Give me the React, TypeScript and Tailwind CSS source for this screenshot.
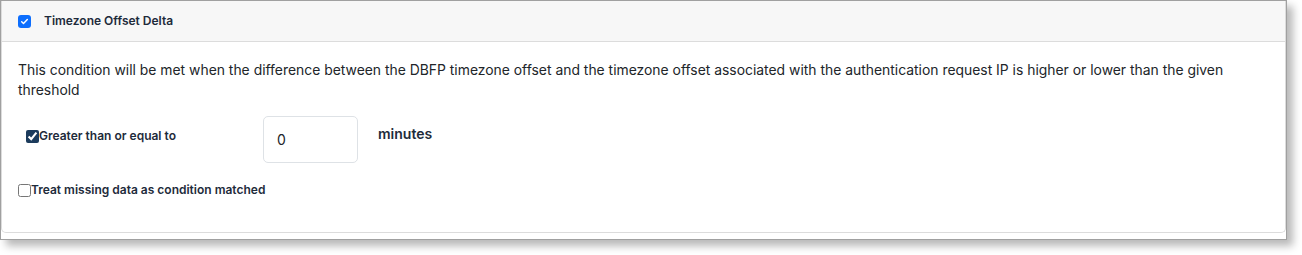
import React from "react";

export default function App() {
  return (
    <div className="w-[1302px] h-[255px] bg-white" style={{ fontFamily: "Inter, 'Liberation Sans', sans-serif" }}>
      <div className="w-[1287px] h-[240px] border border-[#a0a0a0] bg-white shadow-[6px_6px_8px_rgba(0,0,0,0.28)]">
        <div className="h-[232px] border border-t-0 border-[#dcdcdc] rounded-b-[5px] flex flex-col">
          <div className="h-[41px] bg-[#f7f7f7] border-b border-[#dcdcdc] flex items-center pl-[16px]">
            <div className="w-[13px] h-[13px] rounded-[3px] bg-[#0d6efd] flex items-center justify-center">
              <svg width="9" height="9" viewBox="0 0 16 16" fill="none">
                <path d="M3 8.5l3.2 3L13 4.5" stroke="white" strokeWidth="2.6" strokeLinecap="round" strokeLinejoin="round" />
              </svg>
            </div>
            <span className="ml-[13px] text-[12px] font-semibold text-[#1e2b3b]">Timezone Offset Delta</span>
          </div>
          <div className="pl-[16px] pt-[18px]">
            <p className="text-[13.9px] leading-[20px] text-[#212529] pr-[40px]">
              This condition will be met when the difference between the DBFP timezone offset and the timezone offset associated with the authentication request IP is higher or lower than the given threshold
            </p>
            <div className="flex items-start mt-[16px]">
              <label className="w-[245px] pl-[8px] pt-[12px] flex items-center text-[12px] leading-[16px] font-semibold text-[#1e2b3b]">
                <input type="checkbox" defaultChecked className="m-0 w-[13px] h-[13px] accent-[#1c3b5c]" />
                <span>Greater than or equal to</span>
              </label>
              <input
                type="text"
                defaultValue="0"
                className="w-[95px] h-[47px] border border-[#dee2e6] rounded-[5px] px-[13px] text-[14px] text-[#212529] outline-none"
              />
              <span className="ml-[20px] pt-[8px] text-[14px] leading-[20px] font-semibold text-[#1e2b3b]">minutes</span>
            </div>
            <label className="mt-[19px] flex items-center text-[12px] leading-[16px] font-semibold text-[#1e2b3b]">
              <input type="checkbox" className="m-0 w-[13px] h-[13px]" />
              <span>Treat missing data as condition matched</span>
            </label>
          </div>
        </div>
      </div>
    </div>
  );
}
